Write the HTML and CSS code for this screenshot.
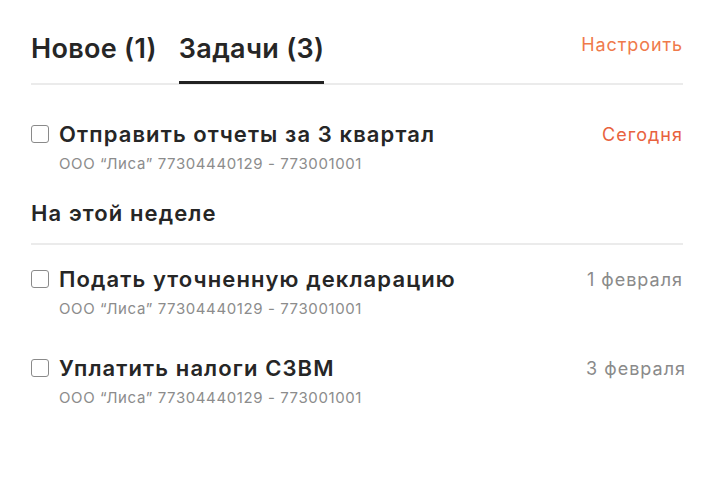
FILE: index.html
```html
<!DOCTYPE html>
<html lang="ru">
  <head>
    <meta charset="UTF-8" />
    <meta name="viewport" content="width=device-width, initial-scale=1.0" />
    <title>Задачи</title>
    <link rel="stylesheet" href="styles.css">
  </head>
  <body>
    <div class="panel">
      <div class="tabs">
        <div class="tab">Новое (1)</div>
        <div class="tab active">Задачи (3)</div>
        <a class="settings" href="#">Настроить</a>
      </div>

      <div class="task">
        <span class="check"></span>
        <div class="task-title">Отправить отчеты за 3 квартал</div>
        <div class="task-date today">Сегодня</div>
        <div class="task-org">ООО “Лиса” 77304440129 - 773001001</div>
      </div>

      <div class="section">На этой неделе</div>

      <div class="task">
        <span class="check"></span>
        <div class="task-title">Подать уточненную декларацию</div>
        <div class="task-date">1 февраля</div>
        <div class="task-org">ООО “Лиса” 77304440129 - 773001001</div>
      </div>

      <div class="task">
        <span class="check"></span>
        <div class="task-title">Уплатить налоги СЗВМ</div>
        <div class="task-date wide">3 февраля</div>
        <div class="task-org">ООО “Лиса” 77304440129 - 773001001</div>
      </div>
    </div>
  </body>
</html>
```

FILE: styles.css
```css
body {
  margin: 0;
  font-family: Inter, "Noto Sans", sans-serif;
  background-color: #fff;
  color: #262626;
}
.panel {
  padding: 30px 31px;
}
.tabs {
  display: flex;
  align-items: flex-start;
  gap: 22px;
  border-bottom: 2px solid #ebebeb;
}
.tab {
  font-size: 27px;
  font-weight: 600;
  letter-spacing: 0.3px;
  line-height: 38px;
  padding-bottom: 15px;
}
.tab.active {
  border-bottom: 3px solid #222;
  margin-bottom: -2px;
  padding-bottom: 13px;
}
.settings {
  margin-left: auto;
  font-size: 18px;
  letter-spacing: 0.9px;
  line-height: 30px;
  color: #ef7a4b;
  text-decoration: none;
}
.task {
  display: grid;
  grid-template-columns: 19px 1fr auto;
  column-gap: 9px;
  align-items: center;
  margin-top: 35px;
}
.check {
  width: 16px;
  height: 16px;
  border: 1.5px solid #8a8a8a;
  border-radius: 3px;
}
.task-title {
  font-size: 22px;
  font-weight: 600;
  letter-spacing: 1.1px;
  line-height: 28px;
}
.task-date {
  font-size: 18px;
  letter-spacing: 1px;
  color: #8a8a8a;
}
.task-date.today {
  color: #e8623e;
}
.task-date.wide {
  margin-right: -3px;
}
.task-org {
  grid-column: 2 / 4;
  font-size: 15px;
  letter-spacing: 0.6px;
  line-height: 20px;
  margin-top: 6px;
  color: #8c8c8c;
}
.section {
  font-size: 22px;
  font-weight: 600;
  letter-spacing: 1.1px;
  line-height: 28px;
  margin-top: 25px;
  padding-bottom: 16px;
  border-bottom: 2px solid #ebebeb;
}
.section + .task {
  margin-top: 20px;
}
```
